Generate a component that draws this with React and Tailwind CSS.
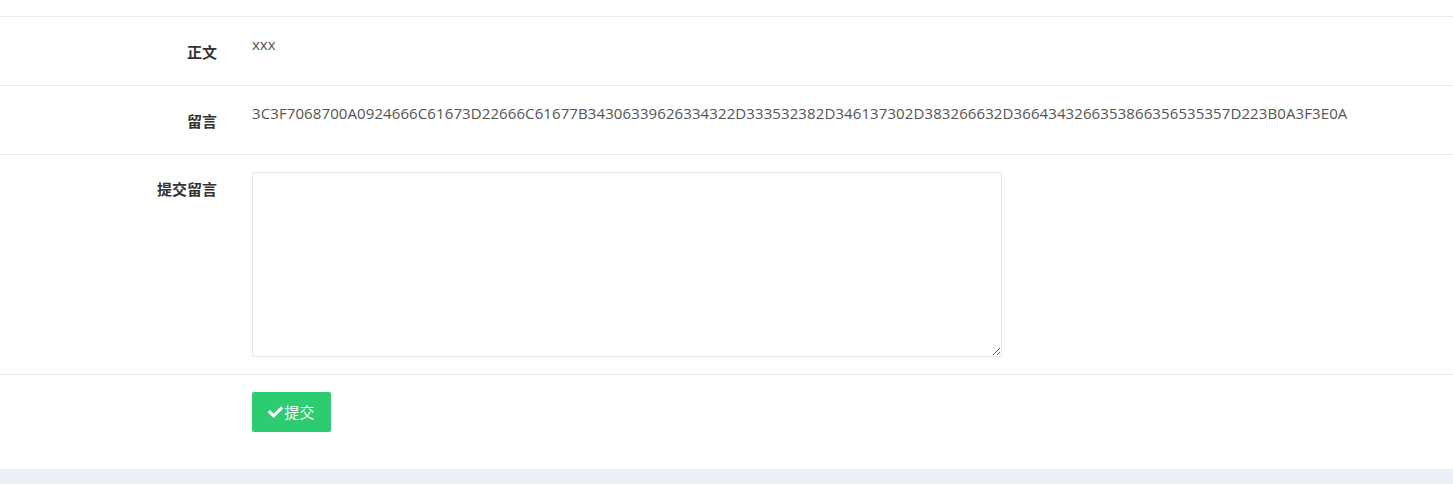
export default function App() {
  const font = { fontFamily: '"Open Sans", "Noto Sans CJK SC", sans-serif' };
  return (
    <div className="min-h-screen bg-[#ecf0f5] text-[15px] leading-[21px] text-[#333]" style={font}>
      <div className="bg-white">
        <div className="h-[17px] border-b border-[#e7ebf1]" />
        <div className="flex py-[17px] border-b border-[#e7ebf1]">
          <div className="w-[217px] shrink-0 text-right font-bold pt-[8px] pb-[5px] text-[#333]">正文</div>
          <div className="pl-[35px] text-[#555]">xxx</div>
        </div>
        <div className="flex py-[17px] border-b border-[#e7ebf1]">
          <div className="w-[217px] shrink-0 text-right font-bold pt-[8px] pb-[5px] text-[#333]">留言</div>
          <div className="pl-[35px] text-[#555] tracking-[0.1px]">
            3C3F7068700A0924666C61673D22666C61677B34306339626334322D333532382D346137302D383266632D3664343266353866356535357D223B0A3F3E0A
          </div>
        </div>
        <div className="flex py-[17px] border-b border-[#e7ebf1]">
          <div className="w-[217px] shrink-0 text-right font-bold pt-[7px] text-[#333]">提交留言</div>
          <div className="pl-[35px]">
            <textarea className="block w-[750px] h-[185px] border border-[#e5e6e7] rounded-[1px] outline-none p-[6px] text-[15px]" />
          </div>
        </div>
        <div className="flex pt-[17px] pb-[37px]">
          <div className="w-[217px] shrink-0" />
          <div className="pl-[35px]">
            <button className="flex items-center justify-center w-[79px] h-[40px] bg-[#2ecc71] rounded-[2px] text-white text-[15px]">
              <svg width="15" height="12" viewBox="0 0 512 400" className="mr-[1px]">
                <path fill="white" d="M173.9 389.8L7.5 223.4c-10-10-10-26.2 0-36.2l36.2-36.2c10-10 26.2-10 36.2 0L192 263.1 432.1 23c10-10 26.2-10 36.2 0l36.2 36.2c10 10 10 26.2 0 36.2L210.1 389.8c-10 10-26.2 10-36.2 0z" />
              </svg>
              提交
            </button>
          </div>
        </div>
      </div>
    </div>
  );
}
